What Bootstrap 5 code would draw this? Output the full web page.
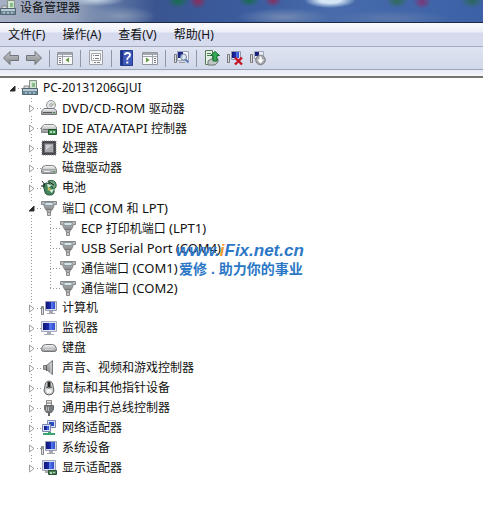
<!DOCTYPE html>
<html lang="zh-CN">
<head>
<meta charset="utf-8">
<meta name="viewport" content="width=device-width, initial-scale=1">
<title>设备管理器</title>
<link href="https://cdn.jsdelivr.net/npm/bootstrap@5.3.0/dist/css/bootstrap.min.css" rel="stylesheet">
<style>
body{font:12px/20px "Noto Sans","Noto Sans CJK SC",sans-serif;color:#111;background:#fff}
svg{display:block;flex:none}
.sprites{width:0;height:0;position:absolute}
.titlebar{height:23px;border-bottom:1px solid #1d2844;padding-bottom:7px;
 background:
 radial-gradient(ellipse 26px 8px at 330px 0,#d4e6f6 40%,transparent),
 radial-gradient(ellipse 30px 6px at 95px 0,#c3d2e2,transparent),
 radial-gradient(ellipse 11px 7px at 178px 1px,#176d4b,transparent),
 radial-gradient(ellipse 9px 8px at 198px 1px,#8c2c5c,transparent),
 radial-gradient(ellipse 11px 7px at 249px 0,#176d4b,transparent),
 radial-gradient(ellipse 9px 7px at 273px 0,#8c2c5c,transparent),
 radial-gradient(ellipse 11px 7px at 397px 1px,#2d6b57,transparent),
 radial-gradient(ellipse 9px 7px at 422px 2px,#7c3575,transparent),
 radial-gradient(ellipse 11px 7px at 472px 1px,#2c6758,transparent),
 radial-gradient(ellipse 48px 9px at 284px 17px,#7289b2,transparent),
 radial-gradient(ellipse 60px 8px at 390px 18px,#5c78ad,transparent),
 radial-gradient(ellipse 36px 10px at 120px 16px,#8496b4,transparent),
 linear-gradient(90deg,#a7b0c4 0,#929fb8 75px,#6078a5 110px,#3a5590 155px,#3b5c9f 250px,#476bab 330px,#3c61a6 100%)}
.menus{height:24px;gap:17px;border-bottom:1px solid #a5abbd;background:linear-gradient(#fafbfe 0,#eceff8 9px,#d5daee 10px,#d6dbee 100%)}
.menus a{color:#111;text-decoration:none}
.tools{height:23px;gap:7px;padding-left:3px;border-bottom:1px solid #9da5b9;background:linear-gradient(#dfe4f2,#d1d8e9)}
.tools button,.toggle{border:0;padding:0;background:none;display:block}
.rule{width:1px;height:17px;background:#8e96aa}
.lip{height:8px;background:linear-gradient(#e6eaf3,#f5f6f9);border-bottom:2px solid #77736f}
.tree ul{margin:0 0 0 19px;padding:0;list-style:none;
 background:repeating-linear-gradient(#999 0 1px,transparent 1px 3px) 12px 0/1px calc(100% - 10px) no-repeat}
.node{height:20px;padding-left:7px;white-space:nowrap}
.toggle{width:11px;height:11px;flex:none}
.tree ul .toggle{background:#fff}
.dots{width:4px;height:1px;flex:none;background:repeating-linear-gradient(90deg,#999 0 1px,transparent 1px 3px)}
.tree .leaf{padding-left:12px}
.leaf .dots{width:10px}
.caption-text{margin-left:5px}
.latin{font-size:13px}
.watermark{left:176px;top:164px;color:#2c78c6;font:bold 17px/18px "Liberation Sans","Noto Sans CJK SC",sans-serif;white-space:nowrap;pointer-events:none}
.site{font-style:italic}
.site b{color:#f49a2a}
.slogan{font-size:14px;margin-left:3px}
</style>
<script src="https://cdn.jsdelivr.net/npm/bootstrap@5.3.0/dist/js/bootstrap.bundle.min.js"></script>
</head>
<body>
<svg class="sprites" aria-hidden="true">
<defs>
<linearGradient id="metal" x2="0" y2="1"><stop stop-color="#fafafa"/><stop offset="1" stop-color="#8e9295"/></linearGradient>
<linearGradient id="grey" x2="0" y2="1"><stop stop-color="#c4c6c8"/><stop offset="1" stop-color="#85888b"/></linearGradient>
<linearGradient id="blue" x2="1" y2="0"><stop stop-color="#111778"/><stop offset=".5" stop-color="#1b2aa8"/><stop offset=".55" stop-color="#5c7eee"/><stop offset="1" stop-color="#2949cc"/></linearGradient>
</defs>
<symbol id="closed" viewBox="0 0 11 11"><path d="M3.500 2v7L8 5.500z" fill="#fff" stroke="#a0a0a0"/></symbol>
<symbol id="open" viewBox="0 0 11 11"><path d="M8 3v5H3z" fill="#222" stroke="#333"/></symbol>
<symbol id="pc" viewBox="0 0 16 16"><path d="M7.500.5h7v9h-7z" fill="#d5e5d5" stroke="#849384"/><path d="M10 3h3v4h-3z" fill="#86bf86"/><path d="M2 6h5v3H2z" fill="#d8dcdf" stroke="#888"/><path d="M.5 8.500h15v6H.5z" fill="#6b8998" stroke="#50656f"/><path d="M1 9h14v2H1z" fill="#b8cbd5"/><path d="M3 12h2v2H3zm4 0h2v2H7zm4 0h2v2h-2z" fill="#9fb6c1"/></symbol>
<symbol id="dvd" viewBox="0 0 16 16"><circle cx="10" cy="5" r="4.500" fill="#e4e7e9" stroke="#94989b"/><path d="M10 5l3-3 1 3z" fill="#b7d4a7"/><circle cx="10" cy="5" r="1.300" fill="#fff" stroke="#999"/><path d="M1 10.500l2-2h10l2.500 2v4H.5z" fill="url(#metal)" stroke="#73777a"/><path d="M2 12.500h9" stroke="#555"/><path d="M12 12h2v1h-2z" fill="#4a8a4a"/></symbol>
<symbol id="ide" viewBox="0 0 16 16"><path d="M.5 7l3-2.500h9l3 2.500v5.500H.5z" fill="url(#metal)" stroke="#85898c"/><path d="M2 9.500h6" stroke="#777"/><path d="M7.500 9.500h8v5h-8z" fill="#3c8e50" stroke="#23572f"/><path d="M9 11h2v2H9zm3 0h2v2h-2z" fill="#b3ddb8"/></symbol>
<symbol id="cpu" viewBox="0 0 16 16"><path d="M1 1h14v14H1z" fill="#44444b"/><path d="M1 1h14v14H1z" fill="none" stroke="#8a8a90" stroke-dasharray="1 1"/><path d="M3.500 3.500h9v9h-9z" fill="#a9aaaf" stroke="#6b6b70"/><path d="M5 5h6L5 10z" fill="#cfd0d3"/></symbol>
<symbol id="disk" viewBox="0 0 16 16"><path d="M.5 9.500q1-4 4-4h7q3 0 4 4v3q0 1-1 1h-13q-1 0-1-1z" fill="url(#metal)" stroke="#808386"/><path d="M1 9.500h14" stroke="#a5a8aa"/><path d="M3 11.500h6" stroke="#eee"/><path d="M12 11h2v1h-2z" fill="#5a9a5a"/></symbol>
<symbol id="battery" viewBox="0 0 16 16"><path d="M7 1q7-2 8 3t-4 6z" fill="#65a37a" stroke="#2e5d43"/><path d="M2 5q3-4 8 0l3 5q1 5-4 5t-5-3z" fill="#42875b" stroke="#244f38"/><path d="M6 4l5 1-4 3zm2 6l5-1-2 4z" fill="#d6ecdb"/><path d="M1 1l3 4M0 6h4M8 2l5 3" stroke="#222"/><circle cx="8" cy="9" r="1.500" fill="#c8b754"/></symbol>
<symbol id="port" viewBox="0 0 16 16"><path d="M.5 1.500h15v3h-2l-2 5h-7l-2-5h-2z" fill="url(#grey)" stroke="#84888b"/><path d="M3.500 2.500h9l-1 3h-7z" fill="#d5e3e7" stroke="#8d989d"/><path d="M5.500 9.500h5l-1 3h-3z" fill="#aeb1b4" stroke="#777"/><path d="M6.500 12.500h3v3h-3z" fill="#ccc" stroke="#888"/></symbol>
<symbol id="monitor" viewBox="0 0 16 16"><path d="M.5 1.500h15v10H.5z" fill="#e6e9f5" stroke="#a4aac0"/><path d="M2 3h12v7H2z" fill="url(#blue)"/><path d="M6 12h4v2h3v1H3v-1h3z" fill="#a6aab2"/></symbol>
<symbol id="computer" viewBox="0 0 16 16"><path d="M4.500 1.500h11v9h-11z" fill="#d5d9e9" stroke="#989db3"/><path d="M5 2h9v7H5z" fill="url(#blue)"/><path d="M8 11h4v2h2v1H6v-1h2z" fill="#a5a8af"/><path d="M.5 6.500h2v8h-2z" fill="#ddd" stroke="#85888c"/><path d="M1 8h1" stroke="#4a8a4a"/></symbol>
<symbol id="keyboard" viewBox="0 0 16 16"><path d="M.5 8.500q1-4 4-4h7q3 0 4 4v1q0 2-2 2h-11q-2 0-2-2z" fill="url(#metal)" stroke="#777"/><path d="M2.500 7.500h11M3.500 9.500h9" stroke="#d0d3d5"/></symbol>
<symbol id="sound" viewBox="0 0 16 16"><path d="M2.500 5.500h3l6-5v14l-6-5h-3z" fill="url(#grey)" stroke="#777b7e"/><path d="M5.500 5v6" stroke="#555"/><path d="M10 3v10" stroke="#ddd"/></symbol>
<symbol id="mouse" viewBox="0 0 16 16"><path d="M4.500 3q3.500-4 7 0l1.500 8q-1 4-5 4t-5-4z" fill="#c9cbcd" stroke="#606366"/><path d="M5 7q3 2 6 0" fill="none" stroke="#555"/><path d="M6.500 2h3v5h-3z" fill="#222"/><path d="M5 10q3-2 6 0l-1 3H6z" fill="#f5f5f5"/></symbol>
<symbol id="usb" viewBox="0 0 16 16"><path d="M5.500.5h5v5h-5z" fill="#eee" stroke="#888"/><path d="M6.500 2h1v2h-1zm2 0h1v2h-1z" fill="#666"/><path d="M3.500 5.500h9v4l-2 3h-5l-2-3z" fill="#777a7c" stroke="#66696b"/><path d="M5.500 7v4M7.500 7v4" stroke="#b4b6b8"/><path d="M7 12h2v4H7z" fill="#666"/></symbol>
<symbol id="network" viewBox="0 0 16 16"><path d="M6.500.5h8v7h-8z" fill="#d8e0f4" stroke="#7b86ad"/><path d="M8 2h5v4H8z" fill="#284bc4"/><path d="M1.500 4.500h8v7h-8z" fill="#d8e0f4" stroke="#7b86ad"/><path d="M3 6h5v4H3z" fill="url(#blue)"/><path d="M7 12h3v1h4v2H2v-2h5z" fill="#3aa56c"/></symbol>
<symbol id="display" viewBox="0 0 16 16"><path d="M1.500.5h13v10h-13z" fill="#d8ddec" stroke="#9da5bf"/><path d="M3 2h10v7H3z" fill="url(#blue)"/><path d="M4 11h5v2h-5z" fill="#aaa"/><path d="M7.500 10.500h8v4h-8z" fill="#478456" stroke="#284e34"/><path d="M9 12h2v2H9zm3 0h2v1h-2z" fill="#b7d6bc"/></symbol>
<symbol id="back" viewBox="0 0 16 16"><path d="M.5 8L7 1.500v4h8.500v5H7v4z" fill="url(#grey)" stroke="#717478"/></symbol>
<symbol id="forward" viewBox="0 0 16 16"><path d="M15.500 8L9 1.500v4H.5v5H9v4z" fill="url(#grey)" stroke="#717478"/></symbol>
<symbol id="panes" viewBox="0 0 16 16"><path d="M.5 2.500h15v12H.5z" fill="#fafafa" stroke="#92979e"/><path d="M1 3h14v2H1z" fill="#a3a9b2"/><path d="M5.500 5v9M1 6.500h14" stroke="#a0a5ad"/><path d="M2 8.500h2M2 10.500h2M2 12.500h2" stroke="#778"/><path d="M12 7.500v5L8.500 10z" fill="#63963e"/></symbol>
<symbol id="panes2" viewBox="0 0 16 16"><path d="M.5 2.500h15v12H.5z" fill="#fafafa" stroke="#92979e"/><path d="M1 3h14v2H1z" fill="#a3a9b2"/><path d="M10.500 5v9M1 6.500h14" stroke="#a0a5ad"/><path d="M12 8.500h2M12 10.500h2M12 12.500h2" stroke="#778"/><path d="M4 7.500v5L7.500 10z" fill="#63963e"/></symbol>
<symbol id="props" viewBox="0 0 16 16"><path d="M1.500.5h13v14h-13z" fill="#f4f5f6" stroke="#9ea2a8"/><path d="M3.500 3.500h9v7h-9z" fill="#fff" stroke="#a4a8ad"/><path d="M5 5.500h1M7 5.500h4M5 8.500h1M7 8.500h4" stroke="#777b82"/><path d="M6 12.500h2M9 12.500h3" stroke="#888"/></symbol>
<symbol id="help" viewBox="0 0 16 16"><path d="M1.500.5h12v15h-12z" fill="#3d58b7" stroke="#233b8f"/><path d="M2 1h2v14H2z" fill="#1d3285"/><path d="M6 5q0-2 2.500-2T11 5q0 1.500-1.500 2.200T8.300 10" fill="none" stroke="#fff" stroke-width="1.800"/><path d="M7.300 11.500h2v2h-2z" fill="#fff"/></symbol>
<symbol id="scan" viewBox="0 0 16 16"><path d="M4.500 1.500h11v9h-11z" fill="#f2f4fa" stroke="#a0a6ba"/><path d="M5 2h5v6H5z" fill="#1d2a8a"/><circle cx="10.500" cy="7" r="3" fill="#dbeaf5" fill-opacity=".85" stroke="#75859a"/><path d="M12.500 9.500l3 3" stroke="#5a7bb4" stroke-width="2"/><path d="M1.500 4.500h2v8h-2z" fill="#ddd" stroke="#777b80"/><path d="M6 12.500h6" stroke="#999"/></symbol>
<symbol id="update" viewBox="0 0 16 16"><path d="M1.500.5h7v14h-7z" fill="#e5f0e5" stroke="#567b5b"/><path d="M3 3.500h4M3 5.500h4" stroke="#4d7d53"/><path d="M4 11l3-2h7v3l-3 3H4z" fill="#c0c6c4" stroke="#6d7774"/><path d="M11 1.500l4.500 4H13V11H9V5.500H6.500z" fill="#35a953" stroke="#176b31"/></symbol>
<symbol id="remove" viewBox="0 0 16 16"><path d="M4.500 1.500h9v8h-9z" fill="#dde0ee" stroke="#9298b0"/><path d="M5 2h7v6H5z" fill="url(#blue)"/><path d="M.5 4.500h2v8h-2z" fill="#ddd" stroke="#777"/><path d="M8 7.500l7 7M15 7.500l-7 7" stroke="#c41527" stroke-width="2.400"/></symbol>
<symbol id="disable" viewBox="0 0 16 16"><path d="M4.500 1.500h9v7h-9z" fill="#e9ebf4" stroke="#a2a7bc"/><path d="M5 2h4v4H5z" fill="#1b237d"/><path d="M.5 4.500h2v8h-2z" fill="#ddd" stroke="#777"/><circle cx="10.500" cy="10" r="4.800" fill="#a4a7ac" stroke="#7d8188"/><path d="M9.500 6.500h2v3h2.500l-3.500 4-3.500-4h2.500z" fill="#fff"/></symbol>
</svg>

<header class="titlebar d-flex align-items-center">
 <svg width="16" height="16"><use href="#pc"/></svg><span class="ms-1">设备管理器</span>
</header>
<nav class="menus d-flex align-items-center ps-2" aria-label="菜单">
 <a href="#">文件(F)</a><a href="#">操作(A)</a><a href="#">查看(V)</a><a href="#">帮助(H)</a>
</nav>
<div class="tools d-flex align-items-center" role="toolbar" aria-label="工具栏">
 <button aria-label="后退"><svg width="16" height="16"><use href="#back"/></svg></button>
 <button aria-label="前进"><svg width="16" height="16"><use href="#forward"/></svg></button>
 <span class="rule"></span>
 <button aria-label="显示控制台树"><svg width="16" height="16"><use href="#panes"/></svg></button>
 <span class="rule"></span>
 <button aria-label="属性"><svg width="16" height="16"><use href="#props"/></svg></button>
 <span class="rule"></span>
 <button aria-label="帮助"><svg width="16" height="16"><use href="#help"/></svg></button>
 <button aria-label="显示操作窗格"><svg width="16" height="16"><use href="#panes2"/></svg></button>
 <span class="rule"></span>
 <button aria-label="扫描硬件改动"><svg width="16" height="16"><use href="#scan"/></svg></button>
 <span class="rule"></span>
 <button aria-label="更新驱动程序"><svg width="16" height="16"><use href="#update"/></svg></button>
 <button aria-label="卸载"><svg width="16" height="16"><use href="#remove"/></svg></button>
 <button aria-label="禁用"><svg width="16" height="16"><use href="#disable"/></svg></button>
</div>
<div class="lip"></div>
<main class="tree position-relative pb-5">
 <div class="node d-flex align-items-center"><button class="toggle" aria-label="折叠"><svg width="11" height="11"><use href="#open"/></svg></button><span class="dots"></span><svg width="16" height="16"><use href="#pc"/></svg><span class="caption-text">PC-20131206GJUI</span></div>
 <ul>
  <li><div class="node d-flex align-items-center"><button class="toggle" aria-label="展开"><svg width="11" height="11"><use href="#closed"/></svg></button><span class="dots"></span><svg width="16" height="16"><use href="#dvd"/></svg><span class="caption-text"><span class="latin">DVD/CD-ROM </span>驱动器</span></div></li>
  <li><div class="node d-flex align-items-center"><button class="toggle" aria-label="展开"><svg width="11" height="11"><use href="#closed"/></svg></button><span class="dots"></span><svg width="16" height="16"><use href="#ide"/></svg><span class="caption-text"><span class="latin">IDE ATA/ATAPI </span>控制器</span></div></li>
  <li><div class="node d-flex align-items-center"><button class="toggle" aria-label="展开"><svg width="11" height="11"><use href="#closed"/></svg></button><span class="dots"></span><svg width="16" height="16"><use href="#cpu"/></svg><span class="caption-text">处理器</span></div></li>
  <li><div class="node d-flex align-items-center"><button class="toggle" aria-label="展开"><svg width="11" height="11"><use href="#closed"/></svg></button><span class="dots"></span><svg width="16" height="16"><use href="#disk"/></svg><span class="caption-text">磁盘驱动器</span></div></li>
  <li><div class="node d-flex align-items-center"><button class="toggle" aria-label="展开"><svg width="11" height="11"><use href="#closed"/></svg></button><span class="dots"></span><svg width="16" height="16"><use href="#battery"/></svg><span class="caption-text">电池</span></div></li>
  <li><div class="node d-flex align-items-center"><button class="toggle" aria-label="折叠"><svg width="11" height="11"><use href="#open"/></svg></button><span class="dots"></span><svg width="16" height="16"><use href="#port"/></svg><span class="caption-text">端口<span class="latin"> (COM </span>和<span class="latin"> LPT)</span></span></div>
   <ul>
    <li class="node leaf d-flex align-items-center"><span class="dots"></span><svg width="16" height="16"><use href="#port"/></svg><span class="caption-text">ECP 打印机端口<span class="latin"> (LPT1)</span></span></li>
    <li class="node leaf d-flex align-items-center"><span class="dots"></span><svg width="16" height="16"><use href="#port"/></svg><span class="caption-text latin">USB Serial Port (COM4)</span></li>
    <li class="node leaf d-flex align-items-center"><span class="dots"></span><svg width="16" height="16"><use href="#port"/></svg><span class="caption-text">通信端口<span class="latin"> (COM1)</span></span></li>
    <li class="node leaf d-flex align-items-center"><span class="dots"></span><svg width="16" height="16"><use href="#port"/></svg><span class="caption-text">通信端口<span class="latin"> (COM2)</span></span></li>
   </ul>
  </li>
  <li><div class="node d-flex align-items-center"><button class="toggle" aria-label="展开"><svg width="11" height="11"><use href="#closed"/></svg></button><span class="dots"></span><svg width="16" height="16"><use href="#computer"/></svg><span class="caption-text">计算机</span></div></li>
  <li><div class="node d-flex align-items-center"><button class="toggle" aria-label="展开"><svg width="11" height="11"><use href="#closed"/></svg></button><span class="dots"></span><svg width="16" height="16"><use href="#monitor"/></svg><span class="caption-text">监视器</span></div></li>
  <li><div class="node d-flex align-items-center"><button class="toggle" aria-label="展开"><svg width="11" height="11"><use href="#closed"/></svg></button><span class="dots"></span><svg width="16" height="16"><use href="#keyboard"/></svg><span class="caption-text">键盘</span></div></li>
  <li><div class="node d-flex align-items-center"><button class="toggle" aria-label="展开"><svg width="11" height="11"><use href="#closed"/></svg></button><span class="dots"></span><svg width="16" height="16"><use href="#sound"/></svg><span class="caption-text">声音、视频和游戏控制器</span></div></li>
  <li><div class="node d-flex align-items-center"><button class="toggle" aria-label="展开"><svg width="11" height="11"><use href="#closed"/></svg></button><span class="dots"></span><svg width="16" height="16"><use href="#mouse"/></svg><span class="caption-text">鼠标和其他指针设备</span></div></li>
  <li><div class="node d-flex align-items-center"><button class="toggle" aria-label="展开"><svg width="11" height="11"><use href="#closed"/></svg></button><span class="dots"></span><svg width="16" height="16"><use href="#usb"/></svg><span class="caption-text">通用串行总线控制器</span></div></li>
  <li><div class="node d-flex align-items-center"><button class="toggle" aria-label="展开"><svg width="11" height="11"><use href="#closed"/></svg></button><span class="dots"></span><svg width="16" height="16"><use href="#network"/></svg><span class="caption-text">网络适配器</span></div></li>
  <li><div class="node d-flex align-items-center"><button class="toggle" aria-label="展开"><svg width="11" height="11"><use href="#closed"/></svg></button><span class="dots"></span><svg width="16" height="16"><use href="#computer"/></svg><span class="caption-text">系统设备</span></div></li>
  <li><div class="node d-flex align-items-center"><button class="toggle" aria-label="展开"><svg width="11" height="11"><use href="#closed"/></svg></button><span class="dots"></span><svg width="16" height="16"><use href="#display"/></svg><span class="caption-text">显示适配器</span></div></li>
 </ul>
 <div class="watermark position-absolute"><div class="site">www.<b>i</b>Fix.net.cn</div><div class="slogan">爱修 . 助力你的事业</div></div>
</main>
</body>
</html>
